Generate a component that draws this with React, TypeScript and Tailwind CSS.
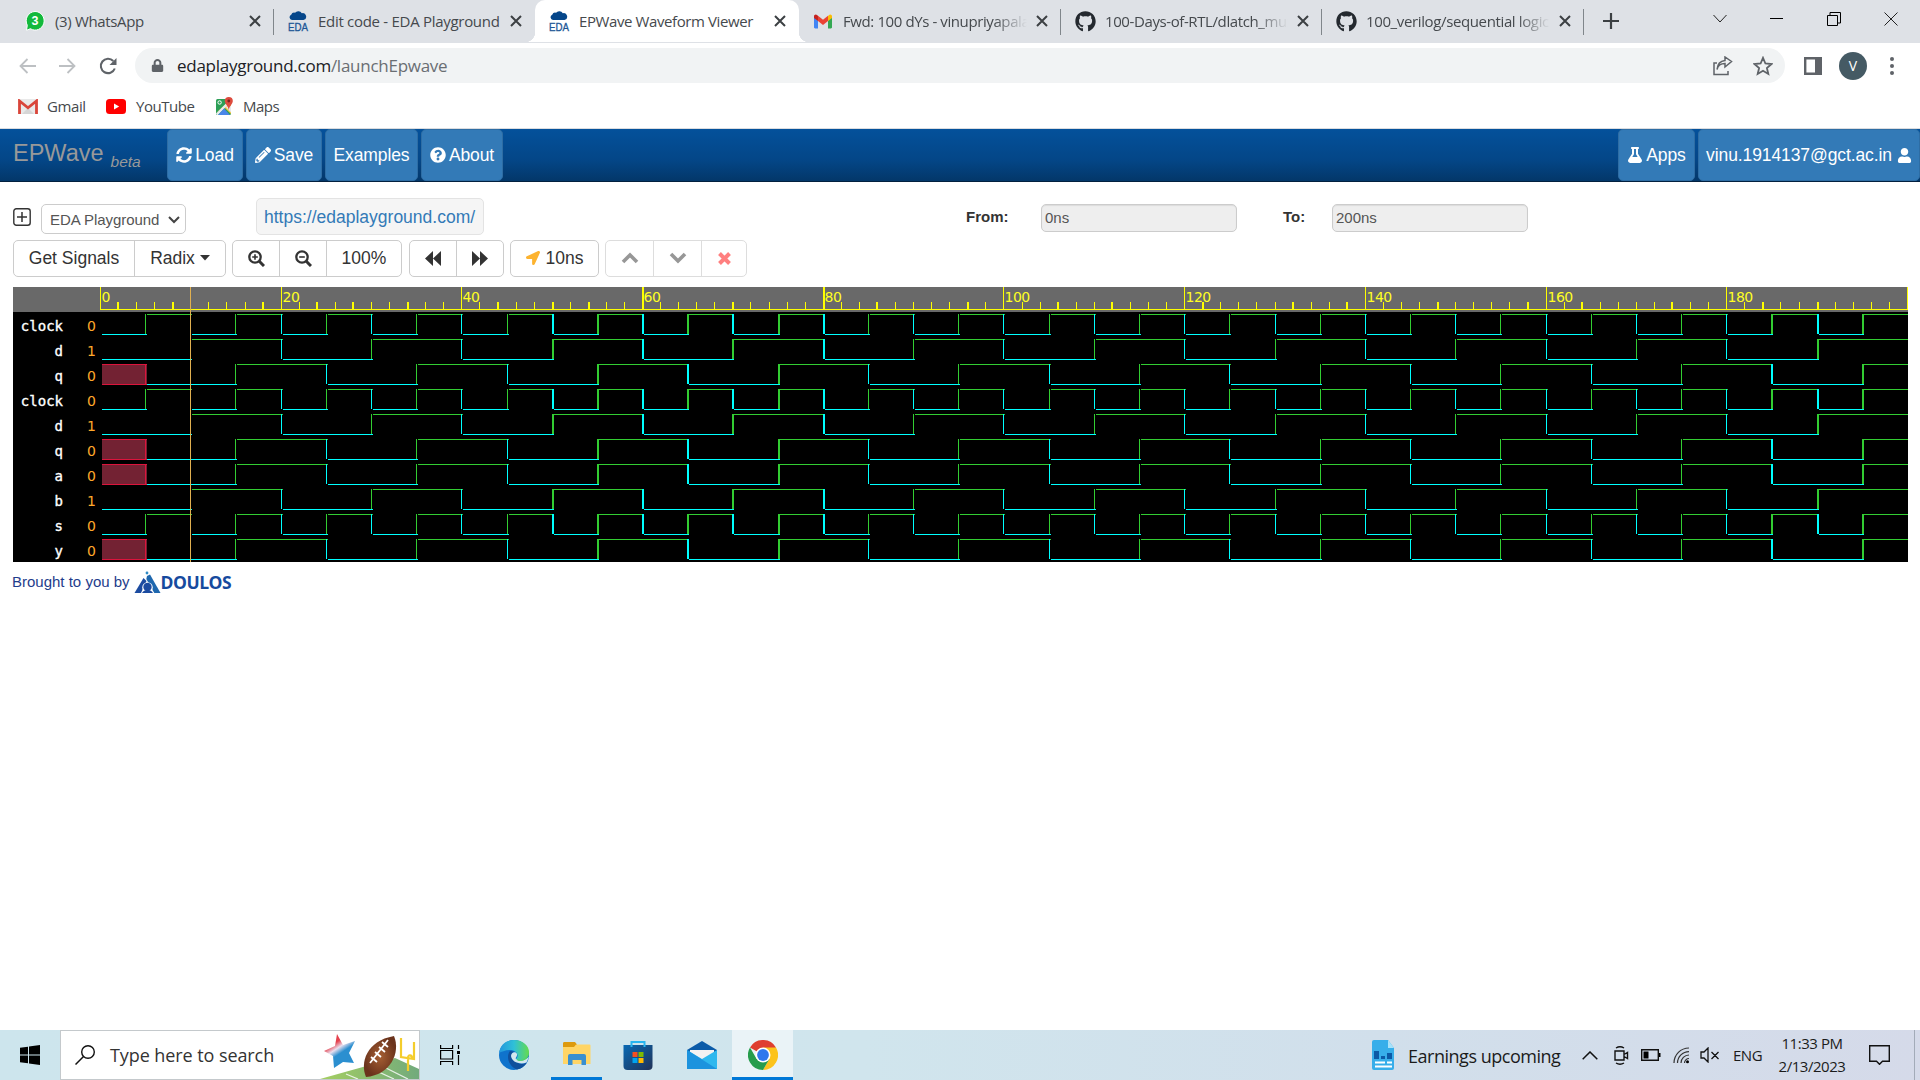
import type { ReactNode } from 'react';
import {
  FaSyncAlt, FaPencilAlt, FaQuestionCircle, FaFlask, FaUser, FaLocationArrow, FaGithub, FaLock,
} from 'react-icons/fa';

/* ---------- small drawings ---------- */

const Cross = () => (
  <svg width="12" height="12" viewBox="0 0 12 12" className="block shrink-0">
    <path d="M1 1l10 10M11 1L1 11" stroke="#3c4043" strokeWidth="2" fill="none" />
  </svg>
);

const WhatsAppIcon = () => (
  <svg width="20" height="22" viewBox="0 0 20 22" className="block">
    <path d="M10 1.5a9 9.3 0 1 1-4.6 17.2L1.5 20.3l.8-5A9 9.3 0 0 1 10 1.500z" fill="#12b93c" stroke="#fff" strokeWidth="1" />
    <text x="10" y="15.300" textAnchor="middle" fontSize="12.500" fontWeight="700" fill="#fff" className="font-['Liberation_Sans',sans-serif]">3</text>
  </svg>
);

const EdaIcon = () => (
  <svg width="22" height="22" viewBox="0 0 22 22" className="block">
    <path d="M5 10a2.800 2.800 0 0 1-.8-5.300A3.300 3.300 0 0 1 8 2.700 4.200 4.200 0 0 1 14.800 3.200a3.400 3.400 0 0 1 1.700 6.800z" fill="#05468a" />
    <text x="11" y="21" textAnchor="middle" textLength="20" lengthAdjust="spacingAndGlyphs" fontSize="10.500" fill="#1d5796" stroke="#1d5796" strokeWidth=".3" className="font-['Liberation_Sans',sans-serif]">EDA</text>
  </svg>
);

const GmailColor = () => (
  <svg width="18" height="15" viewBox="0 0 18 14" className="block">
    <path d="M0 2v10.800c0 .7.500 1.200 1.200 1.200H4V6z" fill="#4285f4" />
    <path d="M18 2v10.800c0 .7-.5 1.200-1.200 1.200H14V6z" fill="#34a853" />
    <path d="M14 1.500V6.500l4-3V2c0-1.800-2-2.600-3.200-1.200z" fill="#fbbc04" />
    <path d="M4 6.500V1.300l5 3.900 5-3.900V6.500l-5 3.900z" fill="#ea4335" />
    <path d="M0 2v1.500l4 3V1.300L3.200.800C2-.6 0 .2 0 2z" fill="#c5221f" />
  </svg>
);

const GmailOld = () => (
  <svg width="20" height="15" viewBox="0 0 20 15" className="block">
    <rect x="1" y="0" width="18" height="15" rx="1" fill="#e9e9e9" />
    <path d="M4 15l6-6 6 6z" fill="#d6d6d6" />
    <path d="M1.500 15V2L10 8.800 18.500 2v13" fill="none" stroke="#d9453a" strokeWidth="2.800" />
  </svg>
);

const YouTube = () => (
  <svg width="20" height="15" viewBox="0 0 20 15" className="block">
    <rect width="20" height="15" rx="3.500" fill="#f00" />
    <path d="M8 4.500v6l5.200-3z" fill="#fff" />
  </svg>
);

const MapsIcon = () => (
  <svg width="19" height="19" viewBox="0 0 19 19" className="block">
    <rect x="1" y="2" width="15" height="16" rx="1.500" fill="#2c9f56" />
    <path d="M1 16L15 3h1v14L9 10z" fill="#f6c945" />
    <path d="M1 16.500L14.500 3l1.500 1.500L3 18H2z" fill="#e8eaed" />
    <path d="M3 18l6-6.500L15 18z" fill="#4a86e8" />
    <path d="M10.500 9.500l5.500 6V9z" fill="#e8eaed" />
    <path d="M13.800 0a4 4 0 0 1 4 4c0 3-3.300 4.500-4 9-.7-4.500-4-6-4-9a4 4 0 0 1 4-4z" fill="#dd4b3e" />
    <circle cx="13.800" cy="4" r="1.400" fill="#7b231e" />
    <circle cx="4.600" cy="5.500" r="1.700" fill="none" stroke="#fff" />
  </svg>
);

const FastArrows = ({ flip = false }: { flip?: boolean }) => (
  <svg width="17" height="15" viewBox="0 0 17 15" className={flip ? 'mr-[2px] block -scale-x-100' : 'block'}>
    <path d="M0 7.500L8 0V15zM8 7.500L16 0v15z" fill="#333" />
  </svg>
);

const Magnifier = ({ plus = false }: { plus?: boolean }) => (
  <svg width="17" height="17" viewBox="0 0 17 17" className="block">
    <circle cx="7" cy="7" r="5.700" fill="none" stroke="#333" strokeWidth="2.300" />
    <path d="M11 11l5 5" stroke="#333" strokeWidth="3" />
    <path d={plus ? 'M4.200 7h5.600M7 4.200v5.600' : 'M4.200 7h5.600'} stroke="#333" strokeWidth="1.600" />
  </svg>
);

const Chevron = ({ down = false }: { down?: boolean }) => (
  <svg width="18" height="12" viewBox="0 0 18 12" className={down ? 'block -scale-y-100' : 'block'}>
    <path d="M2 10l7-7 7 7" stroke="#979797" strokeWidth="3.600" fill="none" />
  </svg>
);

/* ---------- browser chrome ---------- */

const Tab = ({ w, icon, title, active = false, fade = false, sep = false, pad, track }: {
  w: string; icon: ReactNode; title: string; active?: boolean; fade?: boolean; sep?: boolean; pad: string; track: string;
}) => (
  <div className={`relative flex h-full items-center ${w} ${pad} ${active ? 'rounded-t-[10px] bg-white' : ''}`}>
    <div className="flex w-[22px] shrink-0 justify-center">{icon}</div>
    <div className={`ml-[9px] flex-1 whitespace-nowrap text-[15px] leading-[24px] text-[#45494d] ${track} ${fade ? 'overflow-hidden [mask-image:linear-gradient(to_right,black_82%,transparent_100%)]' : ''}`}>{title}</div>
    <div className="mr-[13px] ml-[9px]"><Cross /></div>
    {sep && <div className="absolute top-[9px] right-0 h-[26px] w-px bg-[#80868b]" />}
    {active && (
      <>
        <div className="absolute bottom-0 -left-[10px] h-[10px] w-[10px] bg-[radial-gradient(circle_at_0_0,transparent_10px,white_10.5px)]" />
        <div className="absolute -right-[10px] bottom-0 h-[10px] w-[10px] bg-[radial-gradient(circle_at_100%_0,transparent_10px,white_10.5px)]" />
      </>
    )}
  </div>
);

const TabStrip = () => (
  <div className="flex h-[43px] bg-[#dee1e6] pb-px">
    <Tab w="w-[274px]" pad="pl-6" icon={<WhatsAppIcon />} title="(3) WhatsApp" sep track="tracking-[-0.35px]" />
    <Tab w="w-[261px]" pad="pl-[13px]" icon={<EdaIcon />} title="Edit code - EDA Playground" track="tracking-[-0.29px]" />
    <Tab w="w-[264px]" pad="pl-[13px]" icon={<EdaIcon />} title="EPWave Waveform Viewer" active track="tracking-[-0.4px]" />
    <Tab w="w-[262px]" pad="pl-[13px]" icon={<GmailColor />} title="Fwd: 100 dYs - vinupriyapala" fade sep track="tracking-[-0.4px]" />
    <Tab w="w-[261px]" pad="pl-[13px]" icon={<FaGithub size={21} color="#24292f" />} title="100-Days-of-RTL/dlatch_mux" fade sep track="tracking-[-0.4px]" />
    <Tab w="w-[262px]" pad="pl-[13px]" icon={<FaGithub size={21} color="#24292f" />} title="100_verilog/sequential logic" fade sep track="tracking-[-0.37px]" />
    <div className="flex w-[54px] items-center justify-center">
      <svg width="16" height="16" viewBox="0 0 16 16"><path d="M8 0v16M0 8h16" stroke="#3c4043" strokeWidth="2.200" /></svg>
    </div>
    <div className="ml-auto flex h-[37px] items-center text-black">
      <div className="flex w-[57px] justify-center"><svg width="14" height="9" viewBox="0 0 14 9"><path d="M.500 1L7 8l6.500-7" fill="none" stroke="#222" /></svg></div>
      <div className="flex w-[57px] justify-center"><div className="h-px w-[13px] bg-black" /></div>
      <div className="flex w-[57px] justify-center"><svg width="14" height="14" viewBox="0 0 14 14"><path d="M.500 3.500h10v10h-10zM3 3V.500h10.500V11H11" fill="none" stroke="#000" /></svg></div>
      <div className="flex w-[58px] justify-center"><svg width="14" height="14" viewBox="0 0 14 14"><path d="M.500.500l13 13M13.500.500l-13 13" stroke="#222" /></svg></div>
    </div>
  </div>
);

const Toolbar = () => (
  <div className="flex h-[45px] items-center bg-white pl-[19px]">
    <svg width="17" height="16" viewBox="0 0 17 16"><path d="M17 8H1.500M8.500 1L1.500 8l7 7" fill="none" stroke="#bdc0c3" strokeWidth="1.800" /></svg>
    <svg width="17" height="16" viewBox="0 0 17 16" className="ml-[23px]"><path d="M0 8h15.500M8.500 1l7 7-7 7" fill="none" stroke="#bdc0c3" strokeWidth="1.800" /></svg>
    <svg width="18" height="18" viewBox="0 0 18 18" className="ml-[23px]"><path d="M15.800 11.500A7.200 7.200 0 1 1 14.300 4" fill="none" stroke="#5f6368" strokeWidth="2.100" /><path d="M17.500 1v7h-7z" fill="#5f6368" /></svg>
    <div className="ml-[18px] flex h-[35px] w-[1650px] items-center rounded-full bg-[#f1f3f4] pr-[12px] pl-4">
      <FaLock size={13} color="#5f6368" />
      <div className="ml-[13px] flex-1 text-[17px] leading-6 tracking-[-0.26px] text-[#202124]">
        edaplayground.com<span className="text-[#6a6e73]">/launchEpwave</span>
      </div>
      <svg width="20" height="20" viewBox="0 0 20 20"><path d="M4 7H1v11.500h14V15M4 13.500C5 9 8 7.500 12 7.500V11l6.500-5.500L12 1v3.500C7 5 4.500 8 4 13.500z" fill="none" stroke="#5f6368" strokeWidth="1.500" /></svg>
      <svg width="20" height="20" viewBox="0 0 20 20" className="ml-5"><path d="M10 1.800l2.400 5.700 6.100.5-4.600 4 1.400 6-5.300-3.200L4.700 18l1.400-6-4.600-4 6.100-.5z" fill="none" stroke="#5f6368" strokeWidth="1.800" /></svg>
    </div>
    <svg width="18" height="18" viewBox="0 0 18 18" className="ml-[19px]"><path d="M1.200 1.200h15.600v15.600H1.200z" fill="none" stroke="#5f6368" strokeWidth="2.400" /><path d="M11 1h6v16h-6z" fill="#5f6368" /></svg>
    <div className="ml-[17px] flex h-7 w-7 items-center justify-center rounded-full bg-[#455a64] text-[14px] text-white">V</div>
    <div className="ml-[23px] flex flex-col gap-[3px]">
      <div className="h-1 w-1 rounded-full bg-[#5f6368]" /><div className="h-1 w-1 rounded-full bg-[#5f6368]" /><div className="h-1 w-1 rounded-full bg-[#5f6368]" />
    </div>
  </div>
);

const Bookmarks = () => (
  <div className="flex h-[41px] items-center border-b border-[#dadce0] bg-white pb-[4px] pl-[18px] text-[15px] leading-5 text-[#45494d]">
    <GmailOld /><span className="ml-[9px] w-[59px] tracking-[-0.4px]">Gmail</span>
    <YouTube /><span className="ml-[10px] w-[79px] tracking-[-0.45px]">YouTube</span>
    <MapsIcon /><span className="ml-[9px] tracking-[-0.5px]">Maps</span>
  </div>
);

/* ---------- EPWave page ---------- */

const NavButton = ({ w, children }: { w: string; children: ReactNode }) => (
  <div className={`flex h-[52px] items-center justify-center gap-[3px] rounded-[5px] border border-[#2e6da4] bg-[#337ab7] whitespace-nowrap text-white ${w}`}>{children}</div>
);

const Header = () => (
  <div className="flex h-[53px] border-b border-[#02203f] bg-[linear-gradient(#04519b,#044687_60%,#033769)] pl-[13px] text-[17.5px] leading-6 tracking-[-0.1px]">
    <div className="flex w-[154px] items-baseline pt-[8px] text-[#999]">
      <span className="text-[23.5px] leading-8 tracking-normal">EPWave</span>
      <span className="relative top-[6px] ml-[7px] text-[15.5px] tracking-normal italic">beta</span>
    </div>
    <div className="flex gap-[3px]">
      <NavButton w="w-[76px]"><FaSyncAlt size={16} />Load</NavButton>
      <NavButton w="w-[76px]"><FaPencilAlt size={16} />Save</NavButton>
      <NavButton w="w-[93px]">Examples</NavButton>
      <NavButton w="w-[82px]"><FaQuestionCircle size={16} />About</NavButton>
    </div>
    <div className="ml-auto flex gap-[3px]">
      <NavButton w="w-[77px]"><FaFlask size={16} />Apps</NavButton>
      <NavButton w="w-[222px]">vinu.1914137@gct.ac.in<FaUser size={15} className="ml-[2px]" /></NavButton>
    </div>
  </div>
);

const Field = ({ value }: { value: string }) => (
  <div className="h-7 w-[196px] rounded-[5px] border border-[#ccc] bg-[#eee] pl-[3px] text-[15px] leading-[26px] text-[#555] shadow-[inset_0_1px_1px_rgba(0,0,0,0.08)]">{value}</div>
);

const SourceRow = () => (
  <div className="flex h-[42px] items-start pl-[13px]">
    <svg width="18" height="18" viewBox="0 0 18 18" className="mt-2.5"><rect x=".8" y=".8" width="16.400" height="16.400" rx="2.500" fill="none" stroke="#333" strokeWidth="1.400" /><path d="M9 4v10M4 9h10" stroke="#333" strokeWidth="1.500" /></svg>
    <div className="mt-[6px] ml-[10px] flex h-[30px] w-[145px] items-center rounded-[5px] border border-[#ccc] pt-px pl-2 text-[15px] text-[#555]">
      <span className="pt-px tracking-[-0.05px] whitespace-nowrap">EDA Playground</span>
      <svg width="12" height="8" viewBox="0 0 12 8" className="ml-[9px]"><path d="M1 1l5 5 5-5" fill="none" stroke="#444" strokeWidth="2" /></svg>
    </div>
    <div className="ml-[70px] h-[37px] w-[228px] rounded-[5px] border border-[#e3e3e3] bg-[#f5f5f5] pl-[7px] text-[17.5px] leading-[36px] text-[#337ab7]">https://edaplayground.com/</div>
    <div className="ml-[482px] w-[75px] pt-[9px] text-[15px] leading-5 font-bold text-[#333]">From:</div>
    <div className="mt-[6px]"><Field value="0ns" /></div>
    <div className="ml-[46px] w-[49px] pt-[9px] text-[15px] leading-5 font-bold text-[#333]">To:</div>
    <div className="mt-[6px]"><Field value="200ns" /></div>
  </div>
);

const Group = ({ ml, faint = false, children }: { ml: string; faint?: boolean; children: ReactNode }) => (
  <div className={`flex h-[37px] divide-x rounded-[5px] border ${ml} ${faint ? 'divide-[#ddd] border-[#ddd]' : 'divide-[#ccc] border-[#ccc]'}`}>{children}</div>
);
const Cell = ({ w, children }: { w: string; children: ReactNode }) => (
  <div className={`flex items-center justify-center pb-px whitespace-nowrap ${w}`}>{children}</div>
);

const ButtonRow = () => (
  <div className="flex h-[47px] pl-[13px] text-[17.5px] leading-6 text-[#333]">
    <Group ml="ml-0">
      <Cell w="w-[121px]">Get Signals</Cell>
      <Cell w="w-[90px]">Radix<svg width="10" height="6" viewBox="0 0 10 6" className="ml-[5px]"><path d="M0 0h10L5 5.500z" fill="#333" /></svg></Cell>
    </Group>
    <Group ml="ml-[6px]">
      <Cell w="w-[47px]"><Magnifier plus /></Cell>
      <Cell w="w-[47px]"><Magnifier /></Cell>
      <Cell w="w-[74px]">100%</Cell>
    </Group>
    <Group ml="ml-[7px]">
      <Cell w="w-[47px]"><FastArrows /></Cell>
      <Cell w="w-[46px]"><FastArrows flip /></Cell>
    </Group>
    <Group ml="ml-[6px]">
      <Cell w="w-[87px]"><FaLocationArrow size={14} color="#fdb32f" className="mr-[6px]" />10ns</Cell>
    </Group>
    <Group ml="ml-[6px]" faint>
      <Cell w="w-[48px]"><Chevron /></Cell>
      <Cell w="w-[48px]"><Chevron down /></Cell>
      <Cell w="w-[44px]"><svg width="13" height="13" viewBox="0 0 13 13"><path d="M1.500 1.500l10 10M11.500 1.500l-10 10" stroke="#ff7f7f" strokeWidth="4" /></svg></Cell>
    </Group>
  </div>
);

/* ---------- waveform chart ---------- */

const X0 = 100;
const SCALE = 9.035;
const TOP = 287;
const END = 1908;
const GREEN = '#32cd32';
const CYAN = '#00ffff';
const WIDE_TICKS = new Set([2, 8, 18, 24, 28, 34, 44, 50, 54, 60, 70, 80, 86, 96, 106, 112, 122, 132, 138, 148, 158, 164, 174, 184, 190]);

const px = (t: number) => Math.floor(X0 + t * SCALE + 0.45);
const isWide = (t: number) => (t >= 50 && t <= 80) || t >= 185;
const edgeX = (t: number) => (isWide(t) ? Math.round(X0 + t * SCALE) : px(t));

type Kind = 'clock' | 'data' | 'latched';
const SIGNALS: { name: string; value: string; kind: Kind }[] = [
  { name: 'clock', value: '0', kind: 'clock' },
  { name: 'd', value: '1', kind: 'data' },
  { name: 'q', value: '0', kind: 'latched' },
  { name: 'clock', value: '0', kind: 'clock' },
  { name: 'd', value: '1', kind: 'data' },
  { name: 'q', value: '0', kind: 'latched' },
  { name: 'a', value: '0', kind: 'latched' },
  { name: 'b', value: '1', kind: 'data' },
  { name: 's', value: '0', kind: 'clock' },
  { name: 'y', value: '0', kind: 'latched' },
];
const TIMING: Record<Kind, { first: number; step: number }> = {
  clock: { first: 5, step: 5 },
  data: { first: 10, step: 10 },
  latched: { first: 15, step: 10 },
};

const Wave = ({ kind, y }: { kind: Kind; y: number }) => {
  const { first, step } = TIMING[kind];
  const parts: ReactNode[] = [];
  let start = 102;
  if (kind === 'latched') {
    parts.push(<rect key="x" x="102" y={y + 2} width="45" height="21" fill="#732233" />);
    parts.push(<path key="xo" d={`M102 ${y + 2.5}H147M102 ${y + 22.5}H147M145.5 ${y + 2}v21`} stroke="#dc143c" />);
    start = 147;
  }
  let high = false;
  for (let t = first; t < 200; t += step) {
    const e = edgeX(t);
    const stop = e + 2;
    parts.push(<rect key={`h${t}`} x={start} y={y + (high ? 2 : 22)} width={stop - start} height="1" fill={high ? GREEN : CYAN} />);
    if (t !== 10) parts.push(<rect key={`v${t}`} x={e} y={y + 2} width={isWide(t) ? 2 : 1} height="20" fill={high ? CYAN : GREEN} />);
    high = !high;
    start = stop;
  }
  parts.push(<rect key="end" x={start} y={y + (high ? 2 : 22)} width={END - start} height="1" fill={high ? GREEN : CYAN} />);
  return <g>{parts}</g>;
};

const Waveform = () => {
  const ticks = Array.from({ length: 101 }, (_, i) => i * 2);
  return (
    <svg width="1895" height="275" viewBox="13 287 1895 275" className="ml-[13px] block" shapeRendering="crispEdges">
      <rect x="13" y="287" width="1895" height="25" fill="#696969" />
      <rect x="13" y="312" width="1895" height="250" fill="#000" />
      <rect x="100" y="309" width="1808" height="1" fill="#ff0" />
      {ticks.filter((t) => t !== 10).map((t) => {
        const major = t % 20 === 0;
        const wide = WIDE_TICKS.has(t);
        return <rect key={t} x={wide ? Math.round(X0 + t * SCALE - (isWide(t) ? 0 : 0.6)) : px(t)} y={major ? TOP : 302} width={wide ? 2 : 1} height={major ? 22 : 7} fill="#ff0" />;
      })}
      {Array.from({ length: 10 }, (_, i) => i * 20).map((t) => (
        <text key={t} x={px(t) + 1.5} y="302" fontSize="14" letterSpacing="-0.5" fill="#ff2" className="font-['DejaVu_Sans',sans-serif]">{t}</text>
      ))}
      {SIGNALS.map((s, i) => {
        const y = 312 + i * 25;
        return (
          <g key={i}>
            <text x="63" y={y + 19} textAnchor="end" fontSize="14" fill="#fff" stroke="#fff" strokeWidth=".35" className="font-['DejaVu_Sans_Mono',monospace]">{s.name}</text>
            <text x="96" y={y + 19} textAnchor="end" fontSize="14" fill="#ffa92b" className="font-['DejaVu_Sans',sans-serif]">{s.value}</text>
            <Wave kind={s.kind} y={y} />
          </g>
        );
      })}
      <rect x="190" y="287" width="1" height="275" fill="#e0b050" />
    </svg>
  );
};

const Footer = () => (
  <div className="flex h-10 items-center pl-[12px] text-[15px] text-[#1f3d8c]">
    <span>Brought to you by</span>
    <svg width="27" height="23" viewBox="0 0 27 23" className="ml-[4px]">
      <path d="M.500 22L9.500 7l3 3-5.500 12z" fill="#1c4ba0" />
      <path d="M13 5l3-1.500L26.500 22h-6.200L12.300 8z" fill="#1e67ae" />
      <circle cx="13.500" cy="16.500" r="5.300" fill="#fff" />
      <circle cx="13.500" cy="16" r="4.200" fill="#1c4ba0" />
      <path d="M8 22c1-2 3-3 5.500-3s4.500 1 5.500 3z" fill="#1c4ba0" />
      <circle cx="13" cy="2" r="1.400" fill="#2f8ac4" />
    </svg>
    <span className="font-['Open_Sans','Noto_Sans',sans-serif] text-[17.5px] leading-6 font-bold tracking-[-0.5px] text-[#164a9e]">DOULOS</span>
  </div>
);

/* ---------- taskbar ---------- */

const SearchArt = () => (
  <svg width="99" height="48" viewBox="0 0 99 48" className="ml-auto block">
    <defs>
      <linearGradient id="turf" x1="0" x2="1"><stop offset="0" stopColor="#a5cf62" /><stop offset="1" stopColor="#72aa7c" /></linearGradient>
      <linearGradient id="star" x1="0" y1="0" x2=".6" y2="1"><stop offset=".35" stopColor="#e5424e" /><stop offset=".5" stopColor="#e9dfee" /><stop offset=".65" stopColor="#2b8fd0" /></linearGradient>
      <radialGradient id="ball"><stop offset="0" stopColor="#a65f33" /><stop offset="1" stopColor="#6b331c" /></radialGradient>
    </defs>
    <path d="M0 48L75 27l24 11v10z" fill="url(#turf)" />
    <path d="M26 43l12 5M48 36l26 12M66 37l22 11" stroke="#fff" strokeWidth="1.300" opacity=".8" />
    <path d="M17 3l6 11 12-4-6 12 5 10-11-1-9 6-1-12-9-5 11-5z" fill="url(#star)" />
    <path d="M46 46C40 32 46 10 74 5 81 22 70 44 46 46z" fill="url(#ball)" />
    <path d="M50 32L68 9M51 26l6 5M55 21l6 5M59 16l6 5M62 11l6 5" stroke="#fff" strokeWidth="1.800" />
    <path d="M81 7v19l13 2V11M88 40V27c0-4 4-3 4 0" stroke="#f4cd2c" strokeWidth="2.200" fill="none" />
  </svg>
);

const EdgeIcon = () => (
  <svg width="30" height="30" viewBox="0 0 30 30">
    <defs><linearGradient id="edgeTop"><stop offset="0" stopColor="#2396dc" /><stop offset=".5" stopColor="#2fc0d8" /><stop offset="1" stopColor="#66dc4c" /></linearGradient></defs>
    <circle cx="15" cy="15" r="15" fill="#0f73cc" />
    <path d="M0 13C1 5 7 0 15 0c9 0 15 6 15 12 0 6-5 9-9 9-3 0-5-1-4-2 4-4 0-9-6-9C6 10 2 12 0 13z" fill="url(#edgeTop)" />
    <path d="M11 11c-4 5-2 15 7 18.500 5-1 8-4 10-7-6 3-14 0-15-6-.3-2 0-4 2-5z" fill="#10509c" />
    <path d="M12 16c0-4 5-5 6-2 .6 2-2 4-1 5 3 3 8 2 13-2l-2.500 5.500C21 25 12.500 22 12 16z" fill="#d3e6ee" />
    <path d="M18 19c3 2.500 8 1 12-6-.2 5-4 8-9 8-2 0-3.500-1-3-2z" fill="#55d465" />
  </svg>
);

const FolderIcon = () => (
  <svg width="28" height="24" viewBox="0 0 28 24">
    <path d="M0 1.500C0 .5.500 0 1.500 0H12l2 2.500-2 2.500H0z" fill="#dd9a0e" />
    <path d="M0 5h11l2-2.500h13.500q1 0 1 1V22H0z" fill="#ffd566" />
    <path d="M5 23V14q0-2 2-2h14q2 0 2 2v9h-4.500v-5h-9v5z" fill="#398fd0" />
  </svg>
);

const StoreIcon = () => (
  <svg width="30" height="30" viewBox="0 0 30 30">
    <defs><linearGradient id="bag" x1="0" y1="0" x2="1" y2="1"><stop offset="0" stopColor="#0869b4" /><stop offset="1" stopColor="#213257" /></linearGradient></defs>
    <path d="M.500 5h29v21q0 4-4 4h-21q-4 0-4-4z" fill="url(#bag)" />
    <path d="M8.500 7V2h13v5" fill="none" stroke="#28b5f0" strokeWidth="2" />
    <path d="M9.500 12h5v5h-5z" fill="#f25022" /><path d="M15.500 12h5v5h-5z" fill="#7fba00" />
    <path d="M9.500 18h5v5h-5z" fill="#00a4ef" /><path d="M15.500 18h5v5h-5z" fill="#ffb900" />
  </svg>
);

const MailIcon = () => (
  <svg width="30" height="28" viewBox="0 0 30 28">
    <path d="M0 9L15 0l15 9v5H0z" fill="#0b5ba8" />
    <path d="M3 9h24v8l-12 5L3 17z" fill="#f4f2f2" />
    <path d="M0 9l15 9 15-9v19H0z" fill="#2fb8ee" />
    <path d="M0 9l30 19H0z" fill="#1c93de" />
  </svg>
);

const ChromeIcon = () => (
  <svg width="30" height="30" viewBox="0 0 30 30">
    <path d="M15 15L2 7.500A15 15 0 0 1 28 7.500z" fill="#df3e30" />
    <path d="M15 7.500H28A15 15 0 0 1 15 30l6.500-11.500z" fill="#fcc31c" />
    <path d="M8.500 18.700L2 7.500A15 15 0 0 0 15 30l6.500-11.300z" fill="#269c4c" />
    <circle cx="15" cy="15" r="7.500" fill="#fff" /><circle cx="15" cy="15" r="5.900" fill="#2f78ed" />
  </svg>
);

const Taskbar = () => (
  <div className="flex h-[50px] items-center bg-[linear-gradient(90deg,#cde5ed,#d0e5ed_45%,#d1dfeb_72%,#d5dae9)] text-[#1b1b1b]">
    <div className="flex w-[60px] justify-center">
      <svg width="20" height="20" viewBox="0 0 20 20"><path d="M0 2.800l8-1.100v7.800H0zM9 1.500L20 0v9.500H9zM0 10.500h8v7.800l-8-1.100zM9 10.500h11V20L9 18.500z" fill="#000" /></svg>
    </div>
    <div className="flex h-[50px] w-[360px] items-center border border-[#c4c9cc] bg-white pl-[14px]">
      <svg width="20" height="20" viewBox="0 0 20 20"><circle cx="13" cy="7" r="6.300" fill="none" stroke="#111" strokeWidth="1.400" /><path d="M8.500 11.500L.500 19.500" stroke="#111" strokeWidth="1.500" /></svg>
      <span className="ml-[15px] text-[18px] tracking-[-0.08px] whitespace-nowrap text-[#333]">Type here to search</span>
      <SearchArt />
    </div>
    <div className="flex w-[60px] justify-center">
      <svg width="20" height="20" viewBox="0 0 20 20"><path d="M.600 0v3.500h12V0M.600 20v-3.500h12V20M.600 5.500h12v8.500H.600zM18.500 0v4M18.500 10v10" fill="none" stroke="#000" strokeWidth="1.200" /><path d="M17 6h3v3h-3z" /></svg>
    </div>
    <div className="flex w-[68px] justify-center"><EdgeIcon /></div>
    <div className="mr-[2px] ml-[3px] flex h-full w-[51px] items-center justify-center border-b-[3px] border-[#0078d7] pt-[1px]"><FolderIcon /></div>
    <div className="flex w-[67px] justify-center"><StoreIcon /></div>
    <div className="flex w-[61px] justify-center"><MailIcon /></div>
    <div className="flex h-full w-[61px] items-center justify-center border-b-[3px] border-[#0078d7] bg-[#eaf3f7] pt-[3px]"><ChromeIcon /></div>
    <div className="ml-auto flex items-center">
      <svg width="24" height="30" viewBox="0 0 24 30">
        <path d="M2 0h14l6 8v20q0 2-2 2H2q-2 0-2-2V2q0-2 2-2z" fill="#37aeea" /><path d="M16 0l6 8h-6z" fill="#a8e2fa" />
        <path d="M2 11h5v8H2zM9 16h4v3H9zM15 13h5v6h-5z" fill="#0c5aa6" /><path d="M3 22.500h10M15 22.500h5M3 26.500h17" stroke="#fff" strokeWidth="1.800" />
      </svg>
      <span className="ml-3 w-[174px] pt-[2px] text-[18px] leading-6 tracking-[-0.48px] whitespace-nowrap">Earnings upcoming</span>
      <svg width="16" height="9" viewBox="0 0 16 9"><path d="M.700 8.300L8 1l7.300 7.300" fill="none" stroke="#111" strokeWidth="1.500" /></svg>
      <svg width="16" height="19" viewBox="0 0 16 19" className="ml-[15px]"><path d="M2 5h9v9H2zM11 8.500l3.500-2v6L11 10.500M3 2q4-2.500 8 0M3 17q4 2.500 8 0" fill="none" stroke="#111" strokeWidth="1.400" /></svg>
      <svg width="20" height="12" viewBox="0 0 20 12" className="ml-3"><path d="M.700.700h16.600v10.600H.700z" fill="none" stroke="#111" strokeWidth="1.400" /><path d="M2.500 2.500h5v7h-5zM18 4h1.500v4H18z" /></svg>
      <svg width="17" height="17" viewBox="0 0 17 17" className="ml-3"><path d="M1 16A15 15 0 0 1 16 1M4.500 16A11.500 11.500 0 0 1 16 4.600M8 16a8 8 0 0 1 8-8M11.500 16a4.500 4.500 0 0 1 4.500-4.500" fill="none" stroke="#333" strokeWidth="1.200" /><circle cx="14.500" cy="14.800" r="1.500" /></svg>
      <svg width="20" height="16" viewBox="0 0 20 16" className="ml-[10px]"><path d="M1 5h3l4-4v14l-4-4H1zM11.500 5l7 7M18.500 5l-7 7" fill="none" stroke="#111" strokeWidth="1.300" /></svg>
      <span className="ml-[13px] w-[30px] text-[15px] tracking-[-0.5px]">ENG</span>
      <div className="ml-[12px] flex w-[74px] flex-col items-center text-[15px] leading-[23px] tracking-[-0.45px] whitespace-nowrap"><span>11:33 PM</span><span>2/13/2023</span></div>
      <svg width="21" height="20" viewBox="0 0 21 20" className="ml-[20px]"><path d="M.700.700h19.600v15.600H13.500L10.500 19.300l-3-3H.700z" fill="none" stroke="#111" strokeWidth="1.400" /></svg>
      <div className="mr-[5px] ml-[24px] h-[50px] w-px bg-[#a3abb8]" />
    </div>
  </div>
);

export default function App() {
  return (
    <div className="flex h-[1080px] w-[1920px] flex-col overflow-hidden bg-white">
      <div className="font-['Open_Sans','Noto_Sans',sans-serif]">
        <TabStrip />
        <Toolbar />
        <Bookmarks />
      </div>
      <div className="flex-1 font-['Liberation_Sans',Arial,sans-serif]">
        <Header />
        <div className="pt-[16px]">
          <SourceRow />
          <ButtonRow />
          <Waveform />
          <Footer />
        </div>
      </div>
      <div className="font-['Open_Sans','Noto_Sans',sans-serif]">
        <Taskbar />
      </div>
    </div>
  );
}
